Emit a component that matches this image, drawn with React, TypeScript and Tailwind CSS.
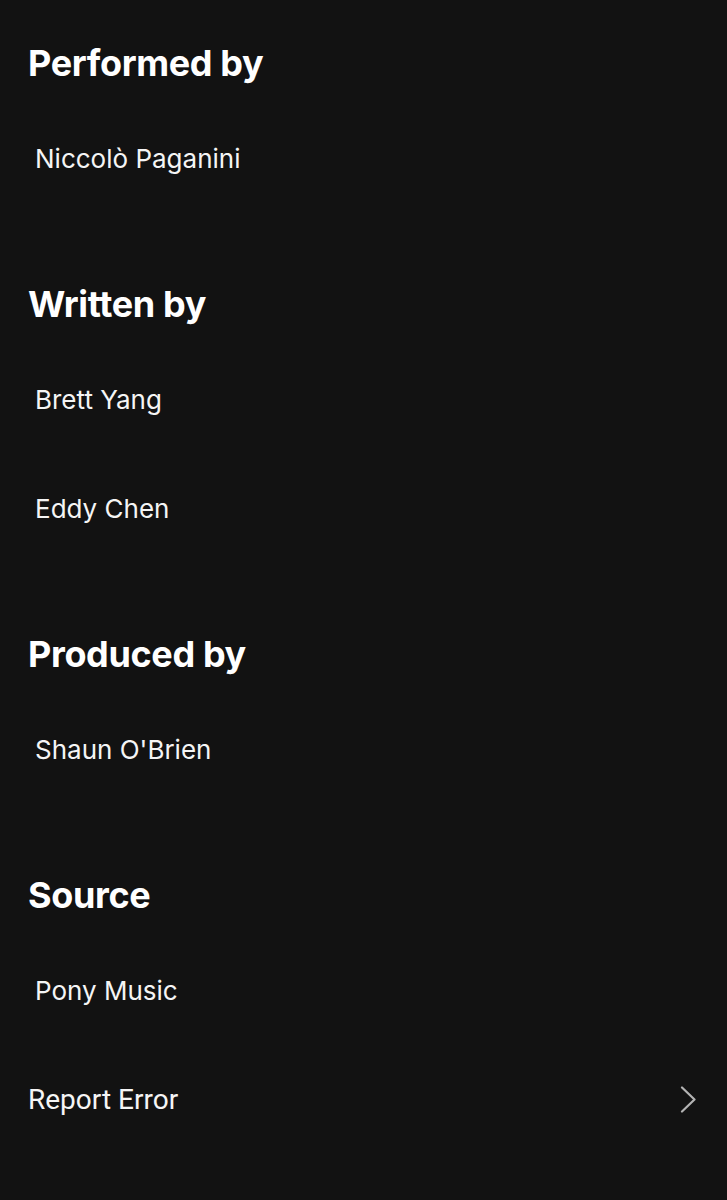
import React from "react";

type Section = { title: string; names: string[] };

const sections: Section[] = [
  { title: "Performed by", names: ["Niccolò Paganini"] },
  { title: "Written by", names: ["Brett Yang", "Eddy Chen"] },
  { title: "Produced by", names: ["Shaun O'Brien"] },
  { title: "Source", names: ["Pony Music"] },
];

function Chevron() {
  return (
    <svg width="17" height="27" viewBox="0 0 17 27" fill="none" aria-hidden="true">
      <path d="M2 1.5 L14.5 13.5 L2 25.5" stroke="#b3b3b3" strokeWidth="2.2" strokeLinecap="round" strokeLinejoin="round" />
    </svg>
  );
}

export default function App() {
  return (
    <div className="min-h-[1200px] w-full flex flex-col bg-[#121212] text-white font-['Inter',sans-serif]">
      {sections.map((s, i) => (
        <section key={s.title} className={`flex flex-col ${i === 0 ? "pt-[39px]" : "pt-[67px]"}`}>
          <h2 className="mb-[17px] h-[48px] px-[28px] flex items-center text-[36px] font-bold tracking-[-0.01em] leading-none">
            {s.title}
          </h2>
          {s.names.map((n) => (
            <div key={n} className="h-[109px] flex items-center pl-[35px] text-[26px] leading-none text-[#f5f5f5]">
              {n}
            </div>
          ))}
        </section>
      ))}
      <div className="h-[109px] flex items-center justify-between pl-[28px] pr-[30px]">
        <span className="font-['Roboto',sans-serif] text-[28px] leading-none text-[#f5f5f5]">Report Error</span>
        <Chevron />
      </div>
    </div>
  );
}
